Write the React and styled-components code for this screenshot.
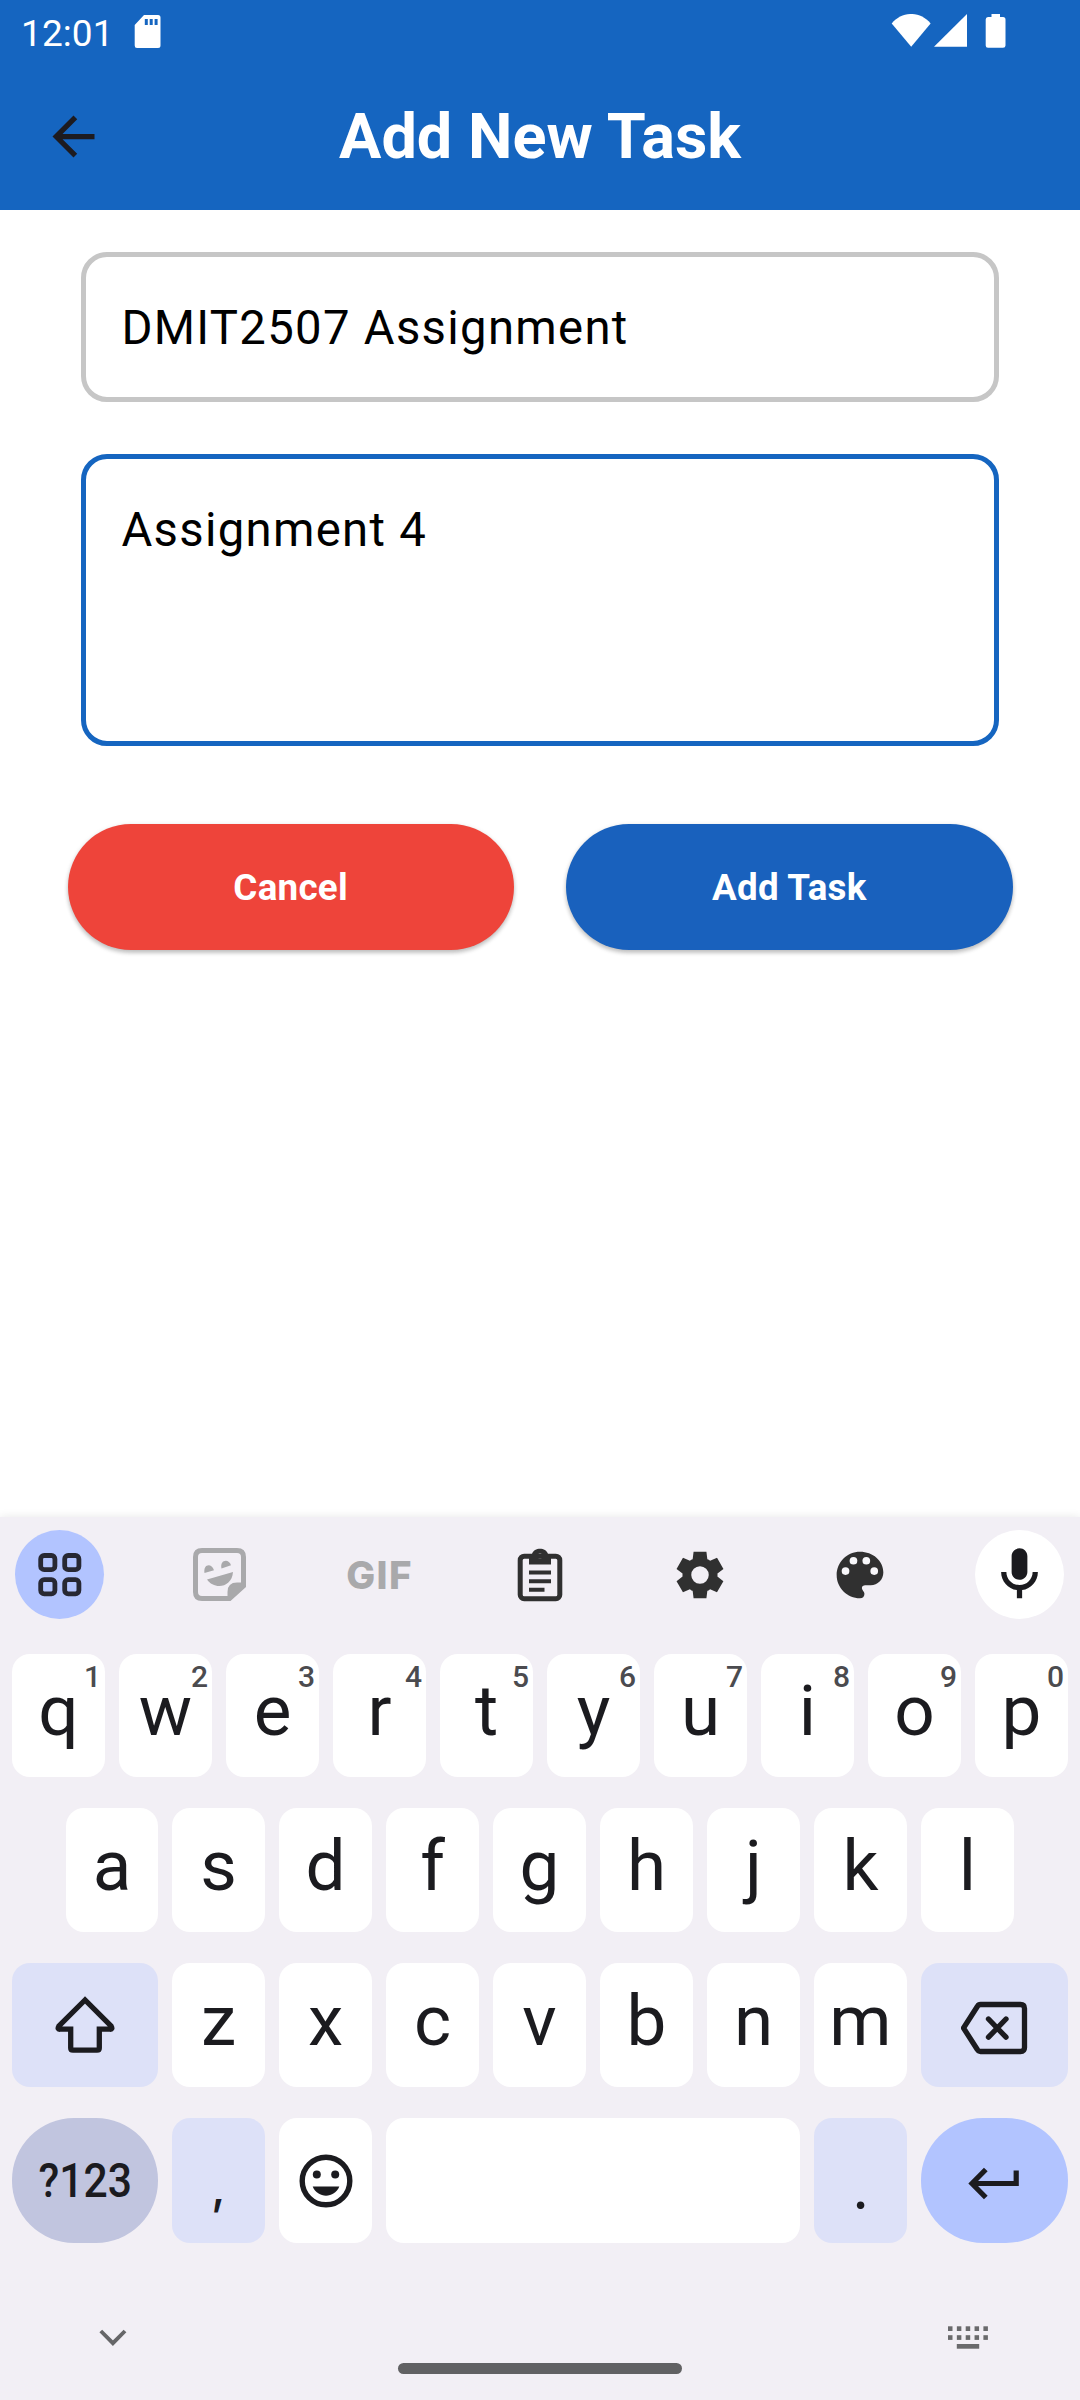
import React from "react";
import styled, { createGlobalStyle } from "styled-components";

const GlobalStyle = createGlobalStyle`
  *, *::before, *::after { box-sizing: border-box; }
  body { margin: 0; background: #fff; font-family: Roboto, "Liberation Sans", sans-serif; }
  svg { display: block; flex: none; }
`;

const Screen = styled.div`
  width: 1080px;
  height: 2400px;
  display: flex;
  flex-direction: column;
  background: #ffffff;
  overflow: hidden;
`;

const Header = styled.header`
  height: 210px;
  flex: none;
  background: #1565c0;
  color: #fff;
`;

const StatusBar = styled.div`
  height: 63px;
  display: flex;
  align-items: flex-start;
  justify-content: space-between;
  padding: 14px 74px 0 21px;
`;

const StatusGroup = styled.div`
  display: flex;
  align-items: flex-start;
`;

const Clock = styled.span`
  width: 113px;
  font-size: 37px;
  line-height: 39px;
  letter-spacing: 0.1px;
`;

const AppBar = styled.div`
  height: 147px;
  display: grid;
  grid-template-columns: 147px 1fr 147px;
  align-items: center;
`;

const BackButton = styled.button`
  width: 147px;
  height: 147px;
  padding: 0;
  border: 0;
  background: none;
  display: flex;
  align-items: center;
  justify-content: center;
`;

const Title = styled.h1`
  margin: 0;
  font-size: 63px;
  line-height: 74px;
  font-weight: 700;
  text-align: center;
`;

const Form = styled.main`
  flex: 1;
  padding: 42px 67.5px 0;
  display: flex;
  flex-direction: column;
`;

const Field = styled.div`
  height: ${(p) => p.$height}px;
  margin: 0 14px ${(p) => p.$after}px 13.5px;
  padding: 42.5px 35.5px;
  border: 5.25px solid ${(p) => (p.$focused ? "#1565c0" : "#c6c6c6")};
  border-radius: 26px;
  color: #000;
  font-size: 47.25px;
  line-height: 56px;
  letter-spacing: 1.3px;
  ${(p) => p.$single && "display: flex; align-items: center; padding-top: 2px; padding-bottom: 0;"}
`;

const Actions = styled.div`
  display: flex;
  gap: 52.5px;
`;

const ActionButton = styled.button`
  flex: 1;
  height: 126px;
  border: 0;
  border-radius: 63px;
  background: ${(p) => p.$color};
  color: #fff;
  font: 700 36.75px Roboto, "Liberation Sans", sans-serif;
  letter-spacing: 0.26px;
  box-shadow: 0 3px 4px rgba(0, 0, 0, 0.2), 0 1px 5px rgba(0, 0, 0, 0.1);
`;

const Keyboard = styled.section`
  height: 883px;
  flex: none;
  background: #f2eff5;
  box-shadow: 0 -1px 8px rgba(0, 0, 0, 0.08);
  display: flex;
  flex-direction: column;
`;

const Toolbar = styled.div`
  height: 137px;
  padding: 13px 15.5px 0 15px;
  display: flex;
  justify-content: space-between;
`;

const Tool = styled.div`
  width: 89px;
  height: 89px;
  border-radius: 50%;
  background: ${(p) => p.$bg || "transparent"};
  display: flex;
  align-items: center;
  justify-content: center;
`;

const GifLabel = styled.span`
  font: 800 38.5px/44px Inter, Roboto, sans-serif;
  letter-spacing: 1.5px;
  color: #a9a9ab;
`;

const Rows = styled.div`
  display: flex;
  flex-direction: column;
  gap: 31px;
  padding: 0 12px;
`;

const Row = styled.div`
  height: ${(p) => p.$height || 124}px;
  padding-left: ${(p) => p.$indent || 0}px;
  display: flex;
  gap: 14px;
`;

const keyColors = {
  plain: "#ffffff",
  soft: "#dde1f8",
  symbols: "#c1c5df",
  enter: "#b2c4ff",
};

const Key = styled.div`
  position: relative;
  width: ${(p) => p.$width || 93}px;
  height: ${(p) => p.$height || 124}px;
  padding-bottom: ${(p) => (p.$raised ? 9 : 0)}px;
  border-radius: ${(p) => (p.$round ? 62 : 18)}px;
  background: ${(p) => keyColors[p.$tone || "plain"]};
  color: #1b1b1f;
  display: flex;
  align-items: center;
  justify-content: center;
  font-size: 71px;
  line-height: 80px;
`;

const Hint = styled.span`
  position: absolute;
  top: 8px;
  right: 4px;
  font-size: 30px;
  line-height: 30px;
  font-weight: 500;
  color: #4b4b4f;
`;

const SymbolsLabel = styled.span`
  font-size: 48.5px;
  line-height: 56px;
  font-weight: 500;
  transform: scaleX(0.88);
`;

const Comma = styled.span`
  font: 500 47px/60px Inter, Roboto, sans-serif;
  padding-top: 13px;
`;

const Period = styled.span`
  font: 400 60px/70px Lato, Roboto, sans-serif;
  padding-top: 10px;
`;

const NavBar = styled.footer`
  flex: 1;
  display: grid;
  grid-template-columns: 1fr 284px 1fr;
  padding: 74px 92px 0;
`;

const NavEnd = styled.div`
  display: flex;
  justify-content: flex-end;
`;

const HomeHandle = styled.div`
  margin-top: 46px;
  width: 284px;
  height: 11px;
  border-radius: 5.5px;
  background: #616163;
`;

const SdCard = () => (
  <svg width="27" height="34" viewBox="0 0 27 34">
    <path fill="#fff" fillRule="evenodd" d="M10 1H24q2.500 0 2.500 2.500V31.500q0 2.500-2.500 2.500H3Q.7 34 .7 31.500V11Zm.8 4v6h3V5Zm4.900 0v6h3V5Zm4.900 0v6h3V5Z" />
  </svg>
);

const StatusIcons = () => (
  <svg width="115" height="35" viewBox="0 0 115 35">
    <g fill="#fff">
      <path d="M.7 9.500C11-3.200 29.300-3.200 39.600 9.500L20.200 32.700Z" />
      <path d="M43 32.800 76 0V32.800Z" />
      <path d="M100.500 0h8.500v3h3q2.500 0 2.500 2.500V31.500q0 2.300-2.500 2.300H97q-2.300 0-2.300-2.300V5.500Q94.700 3 97 3h3.500Z" />
    </g>
  </svg>
);

const BackArrow = () => (
  <svg width="63" height="63" viewBox="0 0 24 24">
    <path fill="#1d1b20" d="M20 11H7.830l5.590-5.590L12 4l-8 8 8 8 1.410-1.410L7.830 13H20v-2z" />
  </svg>
);

const GridIcon = () => (
  <svg width="44" height="44" viewBox="0 0 44 44" fill="none" stroke="#272833" strokeWidth="4.800">
    <rect x="2.700" y="2.500" width="14.200" height="14.200" rx="3.500" />
    <rect x="26.700" y="2.500" width="14.200" height="14.200" rx="3.500" />
    <rect x="2.700" y="26.600" width="14.200" height="14.200" rx="3.500" />
    <rect x="26.700" y="26.600" width="14.200" height="14.200" rx="3.500" />
  </svg>
);

const StickerIcon = () => (
  <svg width="53" height="53" viewBox="0 0 53 53">
    <path fill="none" stroke="#a9a9ab" strokeWidth="5" d="M36 50.500H9Q2.500 50.500 2.500 44V9Q2.500 2.500 9 2.500H44Q50.500 2.500 50.500 9V36" />
    <path fill="#a9a9ab" d="M53 34.500V39L37.500 53H34.500V44Q34.500 34.500 44 34.500ZM14 31.500 40 24C39 40 21 42 14 31.500ZM11.500 25C10 16 18.500 14.500 21 22.300ZM28.500 20.500C26.500 11.500 36 10 38 17.300Z" />
  </svg>
);

const ClipboardIcon = () => (
  <svg width="46" height="54" viewBox="0 0 46 54">
    <rect x="3.200" y="8.200" width="39.600" height="42.500" rx="4" fill="none" stroke="#303030" strokeWidth="5" />
    <path fill="#303030" fillRule="evenodd" d="M12 6H15C17 -1 29-1 31 6H34V16.500H12ZM23 5.500a2.600 2.600 0 1 0 .01 0Z" />
    <path fill="#303030" d="M12 22.500h22v4H12zM12 31.200h22v4H12zM12 39.800h15.500v4H12z" />
  </svg>
);

const GearIcon = () => (
  <svg width="56" height="56" viewBox="0 -960 960 960">
    <path fill="#303030" d="M370-80l-16-128q-13-5-24.500-12T307-235l-119 50L78-375l103-78q-1-7-1-13.500v-27q0-6.500 1-13.500L78-585l110-190 119 50q11-8 23-15t24-12l16-128h220l16 128q13 5 24.500 12t22.500 15l119-50 110 190-103 78q1 7 1 13.500v27q0 6.500-2 13.500l103 78-110 190-118-50q-11 8-23 15t-24 12L590-80H370Zm110-250q62 0 106-44t44-106q0-62-44-106t-106-44q-62 0-106 44t-44 106q0 62 44 106t106 44Z" />
  </svg>
);

const PaletteIcon = () => (
  <svg width="56" height="56" viewBox="0 0 24 24">
    <path fill="#303030" d="M12 2C6.500 2 2 6.500 2 12s4.500 10 10 10c1.100 0 1.900-.8 1.900-1.900 0-.6-.3-1-.6-1.400-.3-.3-.5-.7-.5-1.100 0-.8.7-1.200 1.400-1.200h2.400c3 0 5.400-2.500 5.400-5.500C22 5.800 17.500 2 12 2z" />
    <g fill="#f8f7fa">
      <circle cx="5.800" cy="10.300" r="1.650" />
      <circle cx="9.200" cy="5.900" r="1.650" />
      <circle cx="14.700" cy="5.900" r="1.650" />
      <circle cx="18.100" cy="10.300" r="1.650" />
    </g>
  </svg>
);

const MicIcon = () => (
  <svg width="63" height="63" viewBox="0 0 24 24">
    <path fill="#1b1b1f" d="M12 14c1.660 0 3-1.340 3-3V5c0-1.660-1.340-3-3-3S9 3.340 9 5v6c0 1.660 1.340 3 3 3zM17 11c0 2.760-2.240 5-5 5s-5-2.240-5-5H5c0 3.530 2.610 6.430 6 6.920V21h2v-3.080c3.390-.49 6-3.390 6-6.920h-2z" />
  </svg>
);

const ShiftIcon = () => (
  <svg width="64" height="70" viewBox="0 0 64 70">
    <path fill="none" stroke="#1b1b1f" strokeWidth="5.300" d="M32 10 5.800 36.200Q4 39.500 7 39.200H17.700V58Q17.700 60.200 20 60.200H44Q46.300 60.200 46.300 58V39.200H57Q60 39.500 58.200 36.200Z" />
  </svg>
);

const BackspaceIcon = () => (
  <svg width="68" height="70" viewBox="1 0 68 70" fill="none" stroke="#1b1b1f" strokeWidth="5.300">
    <path d="M20.500 14.500H60.500Q64.500 14.500 64.500 18.500V57.500Q64.500 61.500 60.500 61.500H20.500Q18.500 61.500 17.300 59.500L3.500 38 17.300 16.500Q18.500 14.500 20.500 14.500Z" />
    <path strokeLinecap="round" d="M28.500 29 46 47.200M46 29 28.500 47.200" />
  </svg>
);

const EmojiIcon = () => (
  <svg width="54" height="54" viewBox="0 0 54 54">
    <circle cx="27" cy="27" r="23.800" fill="none" stroke="#1b1b1f" strokeWidth="5.400" />
    <g fill="#1b1b1f">
      <circle cx="17.800" cy="20.500" r="4" />
      <circle cx="36.200" cy="20.500" r="4" />
      <path d="M13.700 32.500H40.300C35.500 44.700 18.500 44.700 13.700 32.500Z" />
    </g>
  </svg>
);

const EnterIcon = () => (
  <svg width="54" height="40" viewBox="1 0 54 40" fill="none" stroke="#1b1b1f" strokeWidth="5.200">
    <path d="M49.200 9.500V22.500H6" />
    <path d="M18.800 8.500 5 22.500 18.800 36.500" />
  </svg>
);

const ChevronIcon = () => (
  <svg width="42" height="42" viewBox="0 0 42 42">
    <path fill="none" stroke="#666668" strokeWidth="3.900" d="M8.800 14 20.900 26.200 33 14" />
  </svg>
);

const KeyboardIcon = () => (
  <svg width="40" height="42" viewBox="0 0 40 42" fill="#6a6a6c">
    {[0, 1, 2, 3, 4].map((i) => (
      <React.Fragment key={i}>
        <rect x={i * 8.850} y="9.300" width="4.500" height="4.700" />
        <rect x={i * 8.850} y="18.200" width="4.500" height="4.700" />
      </React.Fragment>
    ))}
    <rect x="8.800" y="27" width="22.400" height="4.700" />
  </svg>
);

const Letter = ({ char, hint, height, width }) => (
  <Key $raised $height={height} $width={width}>
    {char}
    {hint && <Hint>{hint}</Hint>}
  </Key>
);

export default function App() {
  return (
    <Screen>
      <GlobalStyle />
      <Header>
        <StatusBar>
          <StatusGroup>
            <Clock>12:01</Clock>
            <SdCard />
          </StatusGroup>
          <StatusIcons />
        </StatusBar>
        <AppBar>
          <BackButton aria-label="Back"><BackArrow /></BackButton>
          <Title>Add New Task</Title>
        </AppBar>
      </Header>

      <Form>
        <Field $single $height={150} $after={52}>DMIT2507 Assignment</Field>
        <Field $focused $height={292} $after={78}>Assignment 4</Field>
        <Actions>
          <ActionButton $color="#ee443a">Cancel</ActionButton>
          <ActionButton $color="#1961bd">Add Task</ActionButton>
        </Actions>
      </Form>

      <Keyboard>
        <Toolbar>
          <Tool $bg="#b2c4ff"><GridIcon /></Tool>
          <Tool><StickerIcon /></Tool>
          <Tool><GifLabel>GIF</GifLabel></Tool>
          <Tool><ClipboardIcon /></Tool>
          <Tool><GearIcon /></Tool>
          <Tool><PaletteIcon /></Tool>
          <Tool $bg="#fff"><MicIcon /></Tool>
        </Toolbar>
        <Rows>
          <Row $height={123}>
            {[..."qwertyuiop"].map((c, i) => (
              <Letter key={c} char={c} hint={String((i + 1) % 10)} height={123} />
            ))}
          </Row>
          <Row $indent={54}>
            {[..."asdfghjkl"].map((c, i) => <Letter key={c} char={c} width={i === 0 ? 92 : 93} />)}
          </Row>
          <Row>
            <Key $tone="soft" $width={146}><ShiftIcon /></Key>
            {[..."zxcvbnm"].map((c) => <Letter key={c} char={c} />)}
            <Key $tone="soft" $width={147}><BackspaceIcon /></Key>
          </Row>
          <Row $height={125}>
            <Key $tone="symbols" $width={146} $height={125} $round><SymbolsLabel>?123</SymbolsLabel></Key>
            <Key $tone="soft" $height={125}><Comma>,</Comma></Key>
            <Key $height={125}><EmojiIcon /></Key>
            <Key $width={414} $height={125} />
            <Key $tone="soft" $height={125}><Period>.</Period></Key>
            <Key $tone="enter" $width={147} $height={125} $round><EnterIcon /></Key>
          </Row>
        </Rows>
        <NavBar>
          <ChevronIcon />
          <HomeHandle />
          <NavEnd><KeyboardIcon /></NavEnd>
        </NavBar>
      </Keyboard>
    </Screen>
  );
}
